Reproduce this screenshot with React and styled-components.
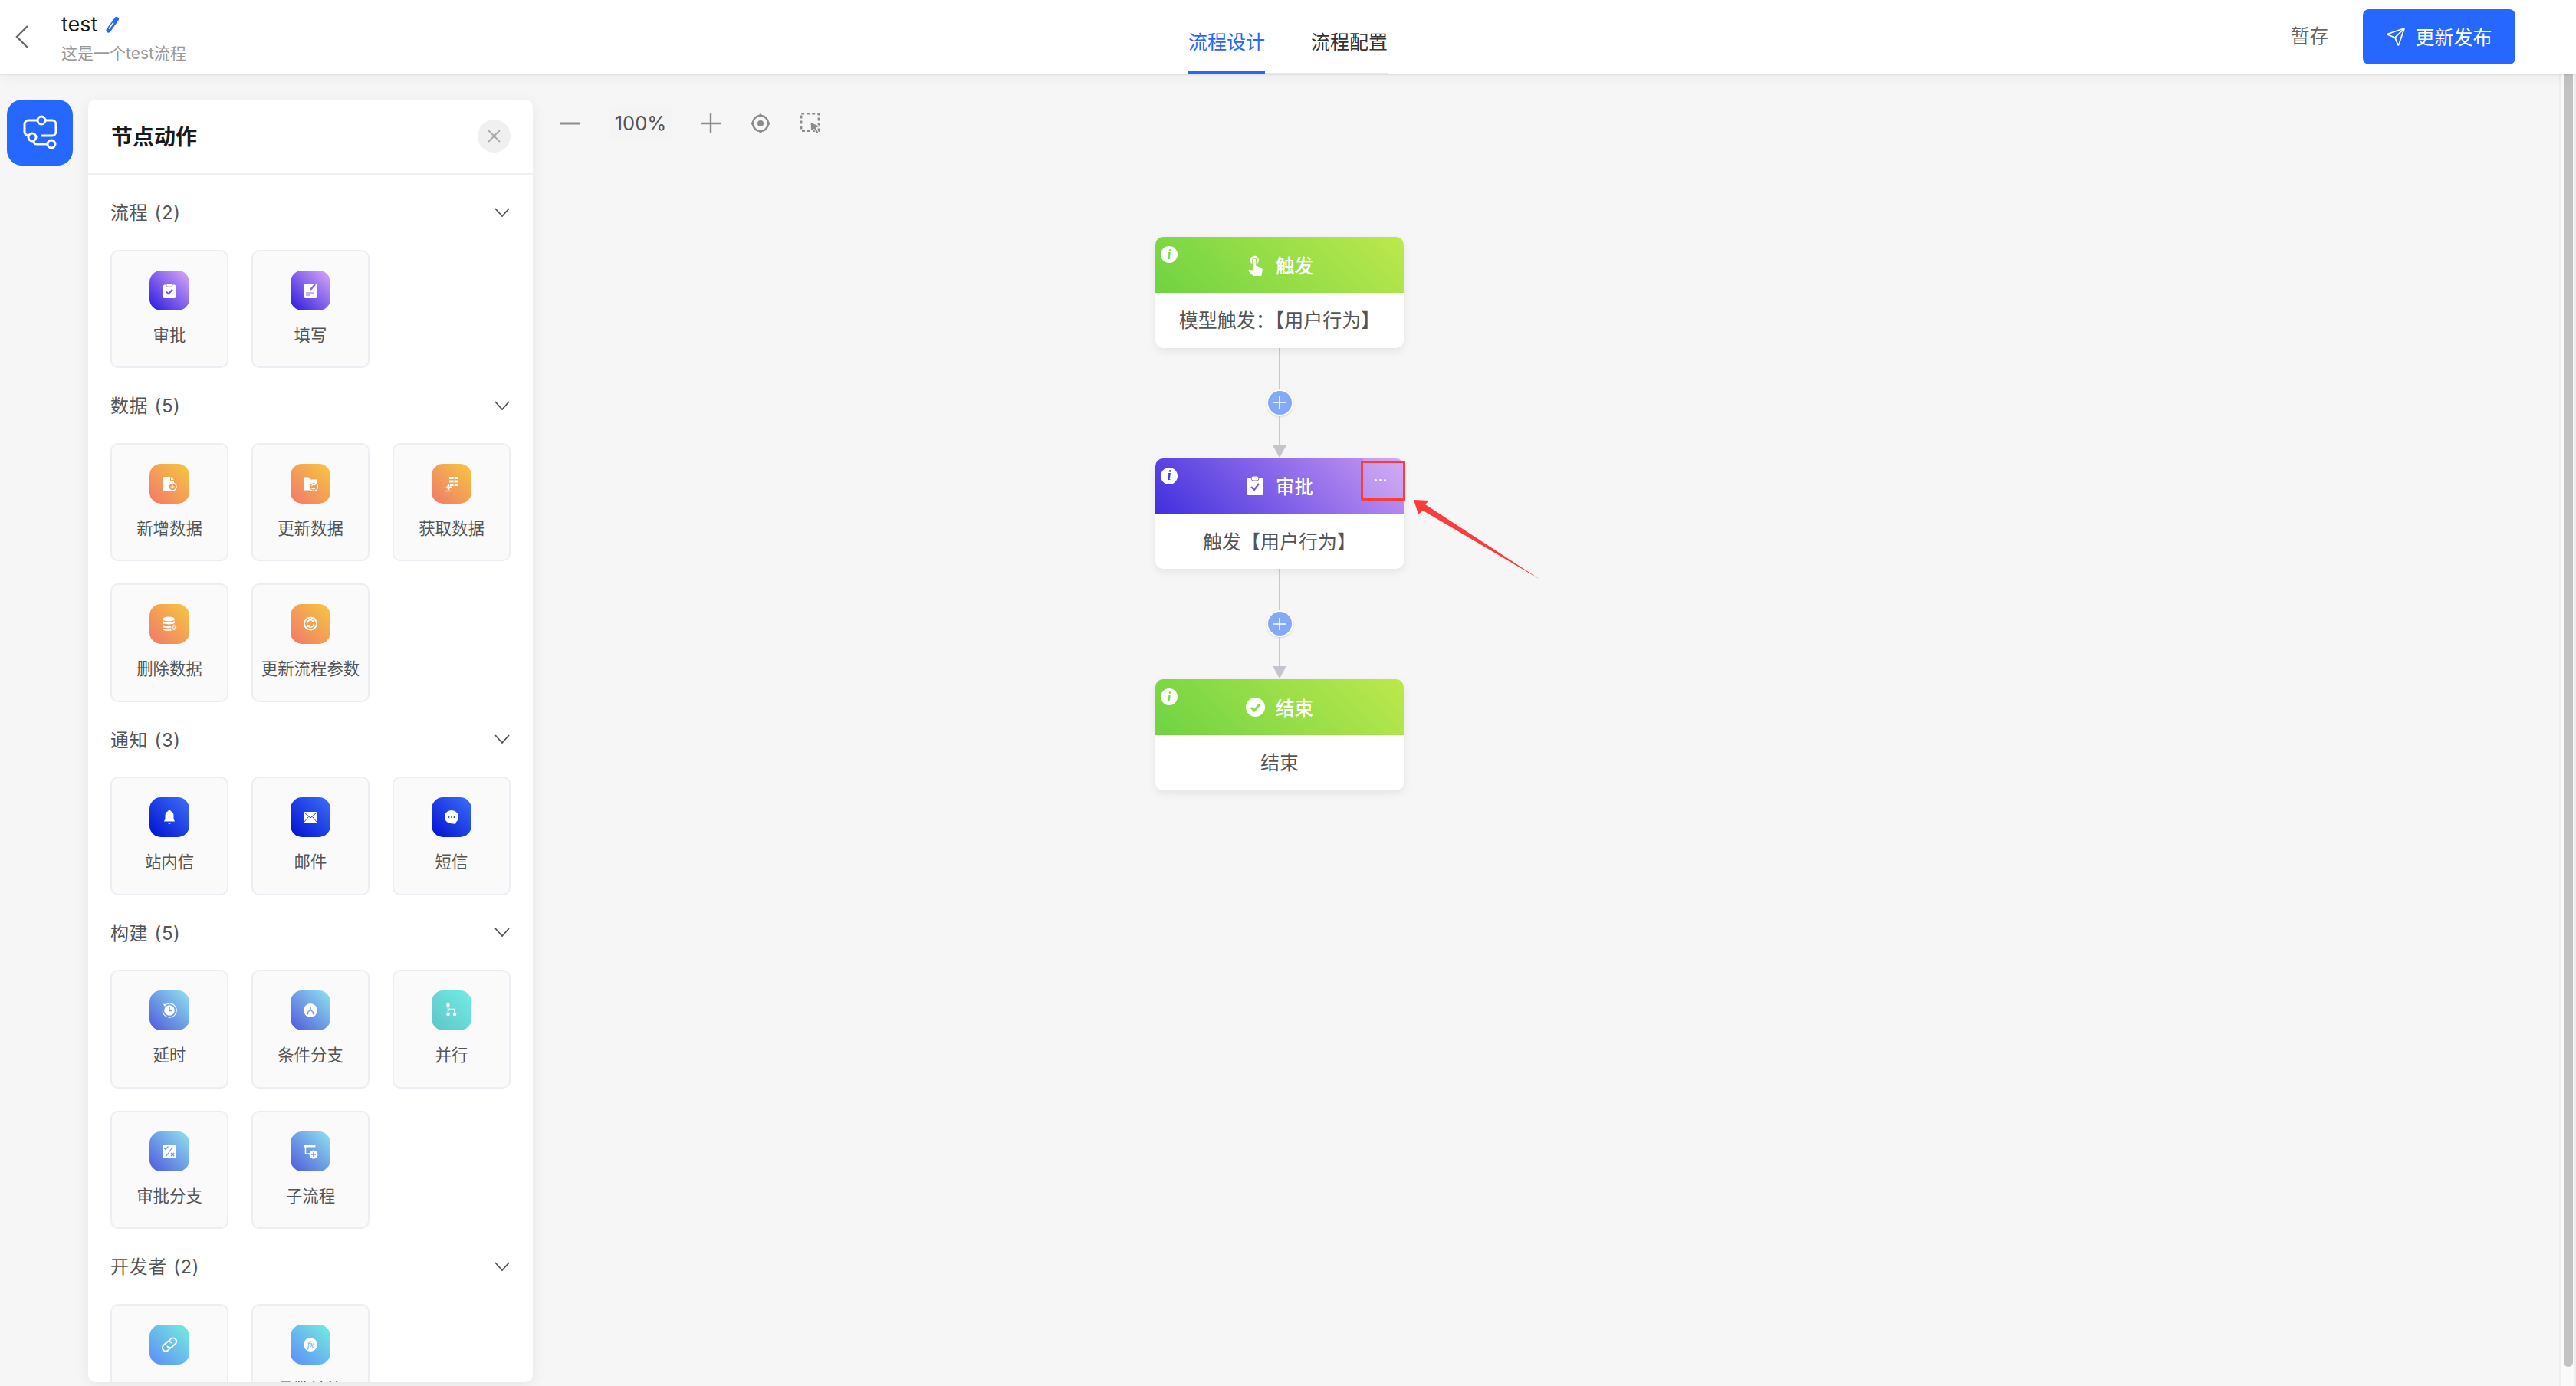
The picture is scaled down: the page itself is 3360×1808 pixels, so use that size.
import styled, { createGlobalStyle } from "styled-components";
import { Send } from "lucide-react";
import { MdTouchApp } from "react-icons/md";

const GlobalStyle = createGlobalStyle`
  html, body {
    margin: 0;
    height: 100%;
    overflow: hidden;
    background: #f6f6f6;
    font-family: Inter, "Noto Sans CJK SC", sans-serif;
  }
  * { box-sizing: border-box; }
`;

const GRADIENTS = {
  green: "linear-gradient(45deg, #6fd343, #bde84c)",
  purple: "linear-gradient(45deg, #3f2fde, #cc9af3)",
  violet: "linear-gradient(45deg, #2a18de, #dcaafa)",
  orange: "linear-gradient(45deg, #f0786c, #f6c83f)",
  blue: "linear-gradient(45deg, #0010d2, #3e70f6)",
  sky: "linear-gradient(45deg, #5058dc, #90e4ee)",
  teal: "linear-gradient(45deg, #5ec4c6, #74ece4)",
  dev: "linear-gradient(45deg, #5c8cf6, #76eede)",
};

const Page = styled.div`
  height: 100vh;
  display: flex;
  flex-direction: column;
  overflow: hidden;
`;

const Header = styled.header`
  position: relative;
  z-index: 5;
  height: 96px;
  flex: none;
  display: grid;
  grid-template-columns: 1550px auto 1fr;
  background: #fff;
  box-shadow: 0 1px 2px rgba(0, 0, 0, 0.18), 0 4px 18px rgba(0, 0, 0, 0.05);
`;

const HeaderLeft = styled.div`
  display: flex;
  align-items: center;
  gap: 43px;
  padding-left: 20px;
`;

const TitleBlock = styled.div`
  display: flex;
  flex-direction: column;
  gap: 7px;
  margin-top: 5px;
`;

const TitleRow = styled.div`
  display: flex;
  align-items: center;
  gap: 11px;
  font-size: 27px;
  line-height: 32px;
  color: #1a1a1a;
`;

const Subtitle = styled.div`
  font-size: 21px;
  line-height: 30px;
  color: #999;
`;

const Tabs = styled.nav`
  display: flex;
  gap: 60px;
  height: 96px;
  border-bottom: 1px solid #e8e8e8;
`;

const Tab = styled.div`
  position: relative;
  padding-top: 37px;
  font-size: 25px;
  line-height: 36px;
  color: ${({ $active }) => ($active ? "#2667ff" : "#333")};

  &::after {
    content: "";
    display: ${({ $active }) => ($active ? "block" : "none")};
    position: absolute;
    left: 0;
    right: 0;
    bottom: -1px;
    height: 3px;
    background: #2667ff;
  }
`;

const HeaderRight = styled.div`
  display: flex;
  align-items: flex-start;
  justify-content: flex-end;
  gap: 45px;
  padding: 12px 79px 0 0;
`;

const SaveLink = styled.span`
  margin-top: 18px;
  font-size: 24.5px;
  line-height: 34px;
  color: #666;
`;

const PublishButton = styled.button`
  width: 199px;
  height: 72px;
  display: flex;
  align-items: center;
  justify-content: center;
  gap: 12px;
  padding: 0 0 3px;
  border: 0;
  border-radius: 8px;
  background: #2667ff;
  color: #fff;
  font: inherit;
  font-size: 25px;

  svg {
    margin-top: 3px;
  }
`;

const Workspace = styled.main`
  flex: 1;
  min-height: 0;
  display: flex;
`;

const Rail = styled.div`
  flex: none;
  width: 115px;
  padding: 34px 0 0 9px;
`;

const RailButton = styled.div`
  width: 86px;
  height: 86px;
  border-radius: 20px;
  background: #2667ff;
`;

const Panel = styled.aside`
  flex: none;
  width: 580px;
  margin: 34px 0 5px;
  display: flex;
  flex-direction: column;
  overflow: hidden;
  border-radius: 10px;
  background: #fff;
  box-shadow: 0 4px 18px rgba(0, 0, 0, 0.07);
`;

const PanelHeader = styled.div`
  flex: none;
  height: 98px;
  display: flex;
  align-items: center;
  justify-content: space-between;
  padding: 0 29px 2px 30px;
  border-bottom: 2px solid #f0f0f0;
`;

const PanelTitle = styled.h2`
  margin: 0;
  font-size: 28px;
  font-weight: 700;
  color: #1a1a1a;
`;

const CloseButton = styled.div`
  width: 43px;
  height: 43px;
  display: flex;
  align-items: center;
  justify-content: center;
  border-radius: 50%;
  background: #f0f0f0;
`;

const PanelBody = styled.div`
  flex: 1;
  min-height: 0;
  overflow: hidden;
  padding: 0 29px;
`;

const SectionHeader = styled.div`
  height: 97.5px;
  display: flex;
  align-items: center;
  justify-content: space-between;
  padding-right: 1px;
`;

const SectionTitle = styled.span`
  margin-bottom: 2px;
  font-size: 24px;
  letter-spacing: 0.6px;
  word-spacing: 1px;
  color: #555;
`;

const CardGrid = styled.div`
  display: grid;
  grid-template-columns: repeat(3, 154px);
  grid-auto-rows: 154.5px;
  gap: 29px 30px;
`;

const Card = styled.div`
  display: flex;
  flex-direction: column;
  align-items: center;
  padding-top: 25px;
  border: 2px solid #edeef3;
  border-radius: 10px;
  background: #fafafa;
`;

const CardIcon = styled.div`
  width: 52px;
  height: 52px;
  flex: none;
  border-radius: 15px;
  background: ${({ $tone }) => GRADIENTS[$tone]};

  svg {
    display: block;
  }
`;

const CardLabel = styled.div`
  margin-top: 17px;
  font-size: 21.4px;
  line-height: 30px;
  white-space: nowrap;
  color: #555;
`;

const Canvas = styled.section`
  flex: 1;
  min-width: 0;
  padding-top: 43px;
`;

const ZoomBar = styled.div`
  height: 43px;
  display: flex;
  align-items: center;
  padding-left: 35px;
`;

const ZoomValue = styled.div`
  width: 83px;
  height: 43px;
  margin: 0 37px 0 38px;
  display: flex;
  align-items: center;
  justify-content: center;
  background: #f4f4f4;
  font-size: 25.5px;
  color: #555;
`;

const ToolIcon = styled.svg`
  flex: none;
  margin-right: ${({ $gap }) => $gap || 0}px;
`;

const Flow = styled.div`
  width: 324px;
  margin: 127px 0 0 812px;
  display: flex;
  flex-direction: column;
`;

const Node = styled.div`
  position: relative;
  height: 144.5px;
  display: flex;
  flex-direction: column;
  border-radius: 10px;
  background: #fff;
  box-shadow: 0 4px 12px rgba(0, 0, 0, 0.08);
`;

const NodeHead = styled.div`
  position: relative;
  height: 73px;
  flex: none;
  display: flex;
  align-items: center;
  justify-content: center;
  gap: 15px;
  padding-bottom: 1px;
  border-radius: 10px 10px 0 0;
  background: ${({ $tone }) => GRADIENTS[$tone]};
  color: #fff;
  font-size: 24.5px;
  font-weight: 500;
`;

const GlyphBox = styled.span`
  width: 24px;
  height: 26px;
  display: flex;
  align-items: center;
  justify-content: center;

  svg {
    flex: none;
  }
`;

const InfoBadge = styled.span`
  position: absolute;
  left: 7px;
  top: 12px;
  width: 22px;
  height: 22px;
  display: flex;
  align-items: center;
  justify-content: center;
  border-radius: 50%;
  background: #fff;
  color: ${({ $color }) => $color};
  font: italic 700 18px "Liberation Serif", serif;
`;

const NodeBody = styled.div`
  flex: 1;
  display: flex;
  align-items: center;
  justify-content: center;
  padding-bottom: 3px;
  font-size: 25px;
  color: #555;
`;

const MoreButton = styled.div`
  position: absolute;
  top: 0;
  right: 0;
  width: 53px;
  height: 53px;
  display: flex;
  justify-content: center;
  gap: 3px;
  padding: 27px 8px 0 0;
  border-radius: 0 10px 0 0;
  background: rgba(255, 255, 255, 0.16);

  i {
    width: 3px;
    height: 3px;
    border-radius: 50%;
    background: #fff;
  }
`;

const RedBox = styled.div`
  position: absolute;
  left: 268px;
  top: 3.5px;
  width: 58px;
  height: 52px;
  border: 3px solid #f93c3c;
  border-radius: 2px;
`;

const RedArrow = styled.svg`
  position: absolute;
  left: 337px;
  top: 54px;
`;

const Connector = styled.div`
  height: 144px;
  flex: none;
  display: flex;
  flex-direction: column;
  align-items: center;
`;

const Wire = styled.div`
  width: 2px;
  height: ${({ $h }) => $h}px;
  background: #c8c9ce;
`;

const PlusButton = styled.div`
  width: 35px;
  height: 35px;
  flex: none;
  display: flex;
  align-items: center;
  justify-content: center;
  border: 2px solid #fff;
  border-radius: 50%;
  background: #84a9f6;
  box-shadow: 0 1px 3px rgba(0, 0, 0, 0.12);
`;

const ArrowHead = styled.div`
  width: 0;
  height: 0;
  border-left: 9px solid transparent;
  border-right: 9px solid transparent;
  border-top: 16px solid #c3c4cc;
`;

const ScrollTrack = styled.div`
  flex: none;
  width: 22px;
  padding: 0 2px 25px 4px;
  border-left: 2px solid #eeeeee;
  border-right: 2px solid #eeeeee;
  background: #fafafa;
`;

const ScrollThumb = styled.div`
  height: 100%;
  border-radius: 0 0 6px 6px;
  background: #c2c2c2;
`;

const W = ({ children }) => (
  <svg width="52" height="52" viewBox="0 0 52 52" fill="#fff">
    {children}
  </svg>
);

const ICONS = {
  approve: (
    <W>
      <rect x="18" y="18.5" width="16" height="17.5" rx="1.5" />
      <rect x="22" y="17" width="8" height="4" rx="2" stroke="#7d5ce8" strokeWidth=".6" />
      <path d="M22 27.5l3 3 5-6" fill="none" stroke="#7a58e8" strokeWidth="2" />
    </W>
  ),
  fill: (
    <W>
      <rect x="18" y="17" width="16" height="19" rx="1.5" />
      <path d="M26 25l6-7" stroke="#8a66ea" strokeWidth="2.4" />
      <path d="M20 29h11M20 32h6" stroke="#8a66ea" strokeWidth="1.2" />
    </W>
  ),
  addData: (
    <W>
      <path d="M17 19a2 2 0 0 1 2-2h8v5h5v13H19a2 2 0 0 1-2-2z" />
      <path d="M28 17l4 4h-4z" />
      <circle cx="30" cy="30" r="5" fill="#f19a58" stroke="#fff" strokeWidth="1.4" />
      <path d="M30 27.5v5M27.5 30h5" stroke="#fff" strokeWidth="1.2" />
    </W>
  ),
  updateData: (
    <W>
      <path d="M17 19a1.5 1.5 0 0 1 1.5-1.5h5l2.5 3h7.5a1.5 1.5 0 0 1 1.5 1.5V33a1.5 1.5 0 0 1-1.5 1.5h-15A1.5 1.5 0 0 1 17 33z" />
      <circle cx="30" cy="30" r="5.5" fill="#f19a58" stroke="#fff" strokeWidth="1.3" />
      <path d="M27.5 29a3 3 0 0 1 5-1M32.5 31a3 3 0 0 1-5 1" fill="none" stroke="#fff" strokeWidth="1.2" />
    </W>
  ),
  getData: (
    <W>
      <path d="M23 17h5.5v3H23zM29.5 17H35v3h-5.5zM23 21.5h5.5v3H23zM29.5 21.5H35v3h-5.5zM29.5 26H35v3h-5.5zM24 26h4.5v3H24z" />
      <path d="M26 30.5h-5.5M23 27.5l-3 3 3 3" fill="none" stroke="#fff" strokeWidth="1.8" />
      <path d="M17 35.5h8" stroke="#fff" strokeWidth="1.4" />
    </W>
  ),
  deleteData: (
    <W>
      <ellipse cx="25" cy="19.5" rx="8" ry="3" />
      <path d="M17 21.5c1 2.5 15 2.5 16 0v3c-1 2.5-15 2.5-16 0zM17 26.5c1 2.5 15 2.5 16 0v3c-1 2.5-15 2.5-16 0zM17 31c1 2.5 9 2.5 11 2l1 1.5c-4 .8-11 .5-12-1.5z" />
      <circle cx="32" cy="30.5" r="3.8" stroke="#f3a252" strokeWidth="1" />
      <path d="M30.7 29.2l2.6 2.6m0-2.6l-2.6 2.6" stroke="#f08c58" strokeWidth="1" />
    </W>
  ),
  param: (
    <W>
      <circle cx="26" cy="25.5" r="8" fill="none" stroke="#fff" strokeWidth="2" />
      <path d="M21.5 25a4.5 4.5 0 0 1 8-2.500M30.5 26a4.5 4.5 0 0 1-8 2.500" fill="none" stroke="#fff" strokeWidth="1.6" />
      <path d="M30.5 20v4h-4zM21.5 31v-4h4z" />
    </W>
  ),
  bell: (
    <W>
      <path d="M26 16a1.5 1.5 0 0 1 1.5 2c3 .8 4 3.5 4 6v4c0 1.5 1.5 2.5 1.5 3.5H19c0-1 1.5-2 1.5-3.5v-4c0-2.5 1-5.2 4-6A1.5 1.5 0 0 1 26 16z" />
      <rect x="24.5" y="33" width="3" height="1.8" rx=".9" />
    </W>
  ),
  mail: (
    <W>
      <rect x="17" y="19" width="18" height="14" rx="1.5" />
      <path d="M17.5 19.5L26 27l8.5-7.5M17.5 32.5l6-7M34.5 32.5l-6-7" fill="none" stroke="#2148e6" strokeWidth="1" />
    </W>
  ),
  chat: (
    <W>
      <path d="M26 17c5 0 9 3.6 9 8.5 0 3-1.3 5.2-3 6.800-.5 1.500-.6 2.200-1.200 2.700-1.500-.4-3-.7-4.800-.7-5 0-9-3.800-9-8.800S21 17 26 17z" />
      <circle cx="22.5" cy="26" r="1" fill="#2148e6" />
      <circle cx="26" cy="26" r="1" fill="#2148e6" />
      <circle cx="29.5" cy="26" r="1" fill="#2148e6" />
    </W>
  ),
  delay: (
    <W>
      <path d="M20 19.5a9 9 0 1 1-2.8 7" fill="none" stroke="#fff" strokeWidth="1.2" />
      <path d="M17.5 17.5l4.5.5-2 3z" />
      <circle cx="26" cy="26" r="6.8" fill="#fff" />
      <path d="M26 22v4.5h4" fill="none" stroke="#6f9ae2" strokeWidth="1.4" />
    </W>
  ),
  condition: (
    <W>
      <circle cx="26" cy="26" r="9" />
      <path d="M26 21v4l-4 4v2M26 25l4 4v2" fill="none" stroke="#6f9ae2" strokeWidth="1.4" />
      <path d="M20 29.5h4l-2 2.5zM28 29.5h4l-2 2.5z" fill="#6f9ae2" />
    </W>
  ),
  parallel: (
    <W>
      <path d="M21.5 19v12M21.5 24.5H30V31" fill="none" stroke="#fff" strokeWidth="1.5" />
      <circle cx="21.5" cy="19" r="2.3" />
      <circle cx="21.5" cy="31" r="2.3" />
      <circle cx="30" cy="31" r="2.3" />
    </W>
  ),
  approveBranch: (
    <W>
      <rect x="17" y="17.5" width="18" height="17.5" />
      <path d="M19 21.5l2 2 3.5-4M22 32l8-11.5" fill="none" stroke="#6f9ae2" strokeWidth="1.3" />
      <path d="M28 28l4 4m0-4l-4 4" stroke="#6f9ae2" strokeWidth="1.7" />
    </W>
  ),
  subflow: (
    <W>
      <rect x="17" y="17" width="15.5" height="3.5" rx="1" />
      <path d="M19.5 20v9h6" fill="none" stroke="#fff" strokeWidth="1.5" />
      <circle cx="30" cy="30" r="5.5" />
      <path d="M30 27v6M27 30h6" stroke="#6f9ae2" strokeWidth="1.5" />
    </W>
  ),
  link: (
    <W>
      <g fill="none" stroke="#fff" strokeWidth="2" strokeLinecap="round">
        <path d="M24.5 22l3.2-3.2a4.3 4.3 0 0 1 6.1 6.1L29.5 29a4.3 4.3 0 0 1-6-.5" />
        <path d="M27.5 30l-3.2 3.2a4.3 4.3 0 0 1-6.1-6.1l4.3-4.1a4.3 4.3 0 0 1 6 .5" />
      </g>
    </W>
  ),
  fx: (
    <W>
      <circle cx="26" cy="26" r="9" />
      <text
        x="26"
        y="30"
        textAnchor="middle"
        fontFamily="Liberation Serif, serif"
        fontStyle="italic"
        fontSize="12"
        fill="#65b4ec"
      >
        fx
      </text>
    </W>
  ),
};

const SECTIONS = [
  {
    title: "流程 (2)",
    tone: "violet",
    items: [
      ["审批", "approve"],
      ["填写", "fill"],
    ],
  },
  {
    title: "数据 (5)",
    tone: "orange",
    items: [
      ["新增数据", "addData"],
      ["更新数据", "updateData"],
      ["获取数据", "getData"],
      ["删除数据", "deleteData"],
      ["更新流程参数", "param"],
    ],
  },
  {
    title: "通知 (3)",
    tone: "blue",
    items: [
      ["站内信", "bell"],
      ["邮件", "mail"],
      ["短信", "chat"],
    ],
  },
  {
    title: "构建 (5)",
    tone: "sky",
    items: [
      ["延时", "delay"],
      ["条件分支", "condition"],
      ["并行", "parallel", "teal"],
      ["审批分支", "approveBranch"],
      ["子流程", "subflow"],
    ],
  },
  {
    title: "开发者 (2)",
    tone: "dev",
    items: [
      ["Webhook", "link"],
      ["函数计算", "fx"],
    ],
  },
];

function Chevron() {
  return (
    <svg width="20" height="12" viewBox="0 0 20 12" fill="none" stroke="#555" strokeWidth="1.8">
      <path d="M1 1l9 10 9-10" />
    </svg>
  );
}

function Edge() {
  return (
    <Connector>
      <Wire $h={54} />
      <PlusButton>
        <svg width="18" height="18" viewBox="0 0 18 18" stroke="#fff" strokeWidth="1.6">
          <path d="M9 1v16M1 9h16" />
        </svg>
      </PlusButton>
      <Wire $h={38} />
      <ArrowHead />
    </Connector>
  );
}

function ApproveGlyph() {
  return (
    <svg width="22" height="25" viewBox="0 0 22 25" fill="#fff">
      <rect y="3" width="22" height="22" rx="2" />
      <rect x="6" width="10" height="6" rx="3" stroke="#8a66ea" strokeWidth="1" />
      <path d="M6 14l4 4 6-8" fill="none" stroke="#7a58e8" strokeWidth="2.2" />
    </svg>
  );
}

function DoneGlyph() {
  return (
    <svg width="25" height="25" viewBox="0 0 25 25">
      <circle cx="12.5" cy="12.5" r="12.5" fill="#fff" />
      <path d="M7 13l4 4 7-8" fill="none" stroke="#8bdb47" strokeWidth="3" />
    </svg>
  );
}

export default function App() {
  return (
    <Page>
      <GlobalStyle />
      <Header>
        <HeaderLeft>
          <svg width="17" height="30" viewBox="0 0 17 30" fill="none" stroke="#666" strokeWidth="2.4">
            <path d="M16 1L2 15l14 14" />
          </svg>
          <TitleBlock>
            <TitleRow>
              test
              <svg width="19" height="22" viewBox="0 0 19 22">
                <path d="M3.5 18.5L14 4" stroke="#2667ff" strokeWidth="6" strokeLinecap="round" />
                <path d="M4 16.5L10 8.5" stroke="#fff" strokeWidth="1.6" />
                <path d="M1 21.5l1-4 2.5 1.5z" fill="#2667ff" />
              </svg>
            </TitleRow>
            <Subtitle>这是一个test流程</Subtitle>
          </TitleBlock>
        </HeaderLeft>
        <Tabs>
          <Tab $active>流程设计</Tab>
          <Tab>流程配置</Tab>
        </Tabs>
        <HeaderRight>
          <SaveLink>暂存</SaveLink>
          <PublishButton>
            <Send size={26} strokeWidth={1.6} />
            更新发布
          </PublishButton>
        </HeaderRight>
      </Header>

      <Workspace>
        <Rail>
          <RailButton>
            <svg width="86" height="86" viewBox="0 0 86 86" fill="none" stroke="#fff" strokeWidth="3">
              <path d="M40 27H28a5 5 0 0 0-5 5v10a6 6 0 0 0 5 5" />
              <path d="M50 27h9a5 5 0 0 1 5 5v10a5 5 0 0 1-5 5H46" strokeLinecap="round" />
              <circle cx="45" cy="27" r="5" />
              <circle cx="33" cy="49" r="5" />
              <path d="M35 54c0 3 2 4 4 4h14" />
              <circle cx="58" cy="58" r="5" />
            </svg>
          </RailButton>
        </Rail>

        <Panel>
          <PanelHeader>
            <PanelTitle>节点动作</PanelTitle>
            <CloseButton>
              <svg width="19" height="19" viewBox="0 0 19 19" stroke="#a9a9a9" strokeWidth="1.8">
                <path d="M2 2l15 15M17 2L2 17" />
              </svg>
            </CloseButton>
          </PanelHeader>
          <PanelBody>
            {SECTIONS.map((section) => (
              <div key={section.title}>
                <SectionHeader>
                  <SectionTitle>{section.title}</SectionTitle>
                  <Chevron />
                </SectionHeader>
                <CardGrid>
                  {section.items.map(([label, icon, tone]) => (
                    <Card key={label}>
                      <CardIcon $tone={tone || section.tone}>{ICONS[icon]}</CardIcon>
                      <CardLabel>{label}</CardLabel>
                    </Card>
                  ))}
                </CardGrid>
              </div>
            ))}
          </PanelBody>
        </Panel>

        <Canvas>
          <ZoomBar>
            <ToolIcon width="26" height="4" viewBox="0 0 26 4">
              <rect width="26" height="3" y=".5" fill="#8c8c8c" />
            </ToolIcon>
            <ZoomValue>100%</ZoomValue>
            <ToolIcon $gap={39} width="26" height="26" viewBox="0 0 26 26" stroke="#8c8c8c" strokeWidth="2.4">
              <path d="M13 0v26M0 13h26" />
            </ToolIcon>
            <ToolIcon $gap={39} width="26" height="26" viewBox="0 0 26 26">
              <circle cx="13" cy="13" r="10" fill="none" stroke="#8c8c8c" strokeWidth="2.4" />
              <circle cx="13" cy="13" r="4" fill="#8c8c8c" />
              <path d="M13 0l3.5 3.5h-7zM13 26l3.5-3.5h-7zM0 13l3.5-3.5v7zM26 13l-3.5-3.5v7z" fill="#8c8c8c" />
            </ToolIcon>
            <ToolIcon width="26" height="28" viewBox="0 0 26 28">
              <rect x="1.2" y="1.2" width="22.6" height="22.6" fill="none" stroke="#8c8c8c" strokeWidth="2.4" strokeDasharray="4 3" />
              <path d="M13 12l13 6-5.5 2 3.5 6-2.5 1.5-3.5-6L13.5 24z" fill="#8c8c8c" stroke="#f6f6f6" strokeWidth="1" />
            </ToolIcon>
          </ZoomBar>

          <Flow>
            <Node>
              <NodeHead $tone="green">
                <InfoBadge $color="#7ed645">i</InfoBadge>
                <GlyphBox>
                  <MdTouchApp size={30} />
                </GlyphBox>
                触发
              </NodeHead>
              <NodeBody>模型触发：【用户行为】</NodeBody>
            </Node>
            <Edge />
            <Node>
              <NodeHead $tone="purple">
                <InfoBadge $color="#4a36e0">i</InfoBadge>
                <GlyphBox>
                  <ApproveGlyph />
                </GlyphBox>
                审批
                <MoreButton>
                  <i />
                  <i />
                  <i />
                </MoreButton>
              </NodeHead>
              <NodeBody>触发【用户行为】</NodeBody>
              <RedBox />
              <RedArrow width="170" height="106" viewBox="0 0 170 106">
                <path d="M0 0l20 1-5 5 150 98L12 14l-6 5z" fill="#f93c3c" />
              </RedArrow>
            </Node>
            <Edge />
            <Node>
              <NodeHead $tone="green">
                <InfoBadge $color="#7ed645">i</InfoBadge>
                <GlyphBox>
                  <DoneGlyph />
                </GlyphBox>
                结束
              </NodeHead>
              <NodeBody>结束</NodeBody>
            </Node>
          </Flow>
        </Canvas>

        <ScrollTrack>
          <ScrollThumb />
        </ScrollTrack>
      </Workspace>
    </Page>
  );
}
